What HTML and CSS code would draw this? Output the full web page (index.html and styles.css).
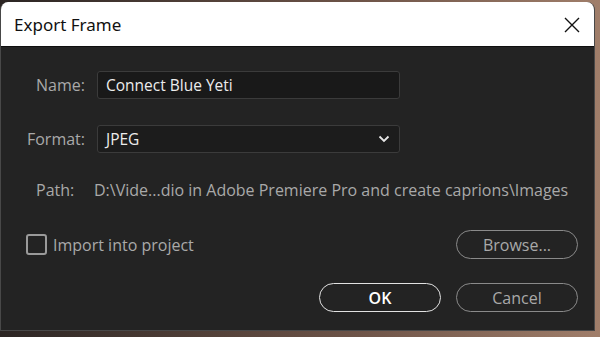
FILE: index.html
```html
<!DOCTYPE html>
<html lang="en">
<head>
    <meta charset="UTF-8">
    <meta name="viewport" content="width=device-width, initial-scale=1.0">
    <title>Export Frame</title>
    <link rel="stylesheet" href="styles.css">
</head>
<body>
    <div class="window">
        <div class="titlebar">
            <span class="title">Export Frame</span>
            <svg class="close" width="16" height="16" viewBox="0 0 16 16">
                <path d="M1 1 L15 15 M15 1 L1 15" stroke="#111" stroke-width="1.4" fill="none"/>
            </svg>
        </div>

        <div class="content">
            <div class="row row-name">
                <label class="label">Name:</label>
                <div class="field">Connect Blue Yeti</div>
            </div>

            <div class="row row-format">
                <label class="label">Format:</label>
                <div class="field select">
                    <span>JPEG</span>
                    <svg width="12" height="8" viewBox="0 0 12 8">
                        <path d="M1.5 1.5 L6 6 L10.5 1.5" stroke="#e6e6e6" stroke-width="1.8" fill="none"/>
                    </svg>
                </div>
            </div>

            <div class="row row-path">
                <span class="path-label">Path:</span>
                <span class="path-value">D:\Vide...dio in Adobe Premiere Pro and create caprions\Images</span>
            </div>

            <div class="row row-import">
                <label class="check">
                    <span class="box"></span>
                    Import into project
                </label>
                <a href="#" class="button">Browse...</a>
            </div>

            <div class="row row-actions">
                <a href="#" class="button primary">OK</a>
                <a href="#" class="button">Cancel</a>
            </div>
        </div>
    </div>
</body>
</html>
```

FILE: styles.css
```css
body {
    margin: 0;
    padding: 0;
    background: linear-gradient(90deg, #2b2523 0%, #6e5448 60%, #a07e6a 100%);
    font-family: "Open Sans", "Noto Sans", sans-serif;
    height: 337px;
    overflow: hidden;
}
.window {
    margin-top: 2px;
    width: 595px;
    height: 329px;
    background-color: #232323;
    border: 1px solid #484848;
    border-top: none;
    border-radius: 8px 8px 0 0;
    box-sizing: border-box;
    overflow: hidden;
}
.titlebar {
    height: 44px;
    background: #ffffff;
    display: flex;
    align-items: center;
    justify-content: space-between;
    padding: 0 14px 0 13px;
    border-bottom: 1px solid #0f0f0f;
}
.title {
    font-family: "Noto Sans", "Open Sans", sans-serif;
    font-size: 17px;
    color: #111;
}
.close {
    margin-top: 1px;
}
.content {
    padding-top: 24px;
}
.row {
    display: flex;
    align-items: center;
}
.label {
    width: 84px;
    text-align: right;
    font-size: 16px;
    color: #a9a9a9;
    margin-right: 12px;
}
.field {
    width: 303px;
    height: 28px;
    box-sizing: border-box;
    background: #191919;
    border: 1px solid #3b3b3b;
    border-radius: 3px;
    padding-left: 8px;
    display: flex;
    align-items: center;
    font-size: 15.5px;
    color: #ececec;
}
.select {
    justify-content: space-between;
    padding-right: 9px;
    background: #1c1c1c;
}
.row-format {
    margin-top: 26px;
}
.row-path {
    margin-top: 26px;
    font-size: 16px;
    color: #a9a9a9;
}
.path-label {
    margin-left: 35px;
    width: 58px;
}
.row-import {
    margin-top: 29px;
    justify-content: space-between;
    padding-right: 16px;
}
.check {
    display: flex;
    align-items: center;
    margin-left: 25px;
    font-size: 16px;
    color: #a9a9a9;
}
.box {
    width: 21px;
    height: 21px;
    box-sizing: border-box;
    border: 2px solid #9a9a9a;
    border-radius: 3px;
    margin-right: 6px;
}
.button {
    display: inline-flex;
    align-items: center;
    justify-content: center;
    width: 122px;
    height: 29px;
    box-sizing: border-box;
    border: 1.5px solid #8a8a8a;
    border-radius: 15px;
    color: #a9a9a9;
    font-size: 16px;
    text-decoration: none;
}
.primary {
    border-color: #e2e2e2;
    color: #ffffff;
    font-weight: 600;
}
.row-actions {
    margin-top: 24px;
    justify-content: flex-end;
    gap: 15px;
    padding-right: 16px;
}
```
